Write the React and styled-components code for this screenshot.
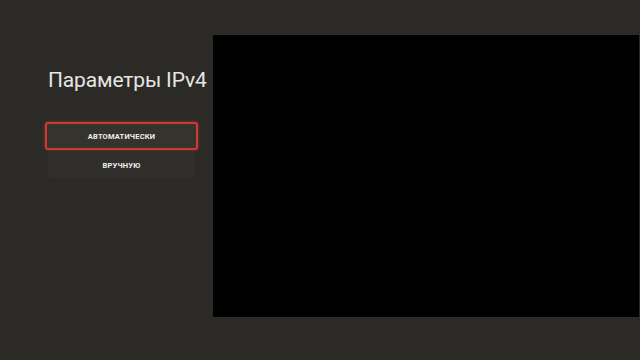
import React from "react";
import styled, { createGlobalStyle } from "styled-components";

const Global = createGlobalStyle`
  html, body { margin: 0; padding: 0; background: #2c2a26; }
  #root { width: 640px; height: 360px; }
`;

const Screen = styled.div`
  width: 640px;
  height: 360px;
  display: flex;
  box-sizing: border-box;
  padding: 35px 1px 43px 0;
  background: #2c2a26;
  font-family: Roboto, "Noto Sans", sans-serif;
`;

const Side = styled.div`
  width: 213px;
  flex: none;
  display: flex;
  flex-direction: column;
  padding-top: 30px;
  box-sizing: border-box;
`;

const Title = styled.h1`
  margin: 0 0 0 48px;
  font-size: 21px;
  font-weight: 400;
  color: #e6e6e3;
  line-height: 30px;
  white-space: nowrap;
  letter-spacing: -0.15px;
`;

const Options = styled.div`
  margin: 27px 15px 0 45px;
  display: flex;
  flex-direction: column;
  gap: 2px;
`;

const Option = styled.div`
  height: ${(p) => (p.$active ? "28px" : "26px")};
  box-sizing: border-box;
  display: flex;
  align-items: center;
  justify-content: center;
  font-size: 7.5px;
  font-weight: 700;
  letter-spacing: 0.2px;
  color: #efefec;
  background: ${(p) => (p.$active ? "#34332e" : "#312f2b")};
  border: ${(p) => (p.$active ? "2px solid #d0392e" : "none")};
  border-radius: 3px;
  box-shadow: ${(p) => (p.$active ? "0 0 3px rgba(220,60,50,0.6)" : "none")};
  margin: ${(p) => (p.$active ? "0" : "0 3px")};
`;

const Viewport = styled.div`
  flex: 1;
  background: #000;
`;

export default function App() {
  return (
    <>
      <Global />
      <Screen>
        <Side>
          <Title>Параметры IPv4</Title>
          <Options>
            <Option $active>АВТОМАТИЧЕСКИ</Option>
            <Option>ВРУЧНУЮ</Option>
          </Options>
        </Side>
        <Viewport />
      </Screen>
    </>
  );
}
